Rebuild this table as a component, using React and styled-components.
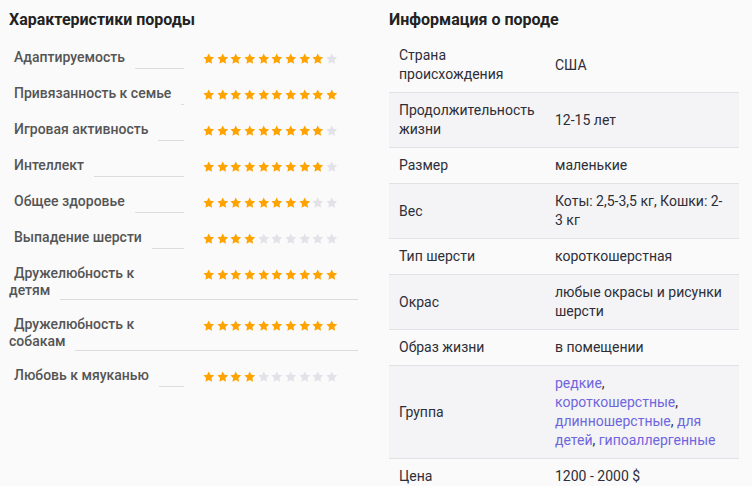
import React from "react"
import styled, { createGlobalStyle } from "styled-components"

const GlobalStyle = createGlobalStyle`
  body {
    margin: 0;
    background: #fafafa;
    font-family: Roboto, "Noto Sans", Arial, sans-serif;
  }
`

const Page = styled.div`
  display: flex;
  align-items: flex-start;
  gap: 31px;
  padding: 9px 0 0 9px;
  width: 752px;
  height: 486px;
  box-sizing: border-box;
  overflow: hidden;
`

const Column = styled.section`
  width: ${p => p.$width}px;
  flex: none;
`

const Title = styled.h2`
  margin: 0 0 ${p => p.$gap}px;
  font-size: 16px;
  line-height: 22px;
  font-weight: 700;
  color: #222;
`

// stars float right over the leader line; the name's background hides the rest
const Trait = styled.div`
  min-height: 19px;
  font-size: 14px;
  line-height: 17px;
  font-weight: 500;
  color: #555;
  margin-bottom: 16px;
  border-bottom: 1px solid #dcdce0;
`

const TraitName = styled.span`
  padding: 0 10px 8px 5px;
  background: #fafafa;
`

const Stars = styled.span`
  float: right;
  width: 155px;
  height: 17px;
  padding: 1px 0 3px 19px;
  display: flex;
  align-items: center;
  background: #fafafa;
`

const Star = styled.svg`
  width: 11.5px;
  height: 11.5px;
  margin-right: 2.17px;
  flex: none;
  fill: ${p => (p.$on ? "#ffa300" : "#e2e2e8")};
`

const Table = styled.table`
  width: 100%;
  border-collapse: collapse;
  font-size: 14px;
  line-height: 19px;
  color: #2e2e38;
`

const Row = styled.tr`
  background: ${p => (p.$shaded ? "#f4f4f6" : "transparent")};
  border-bottom: 1px solid #e1e1e6;
`

const Key = styled.td`
  width: 146px;
  padding: 8px 10px;
  vertical-align: middle;
`

const Value = styled.td`
  padding: 8px 10px 8px 0;
  vertical-align: middle;
`

const Tag = styled.a`
  color: #6f66de;
  text-decoration: none;
`

const traits = [
  ["Адаптируемость", 9],
  ["Привязанность к семье", 10],
  ["Игровая активность", 9],
  ["Интеллект", 9],
  ["Общее здоровье", 8],
  ["Выпадение шерсти", 4],
  ["Дружелюбность к детям", 10],
  ["Дружелюбность к собакам", 10],
  ["Любовь к мяуканью", 4],
]

const groups = ["редкие", "короткошерстные", "длинношерстные", "для детей", "гипоаллергенные"]

const info = [
  ["Страна происхождения", "США"],
  ["Продолжительность жизни", "12-15 лет"],
  ["Размер", "маленькие"],
  ["Вес", "Коты: 2,5-3,5 кг, Кошки: 2-3 кг"],
  ["Тип шерсти", "короткошерстная"],
  ["Окрас", "любые окрасы и рисунки шерсти"],
  ["Образ жизни", "в помещении"],
  [
    "Группа",
    groups.map((g, i) => (
      <React.Fragment key={g}>
        <Tag href="#">{g}</Tag>
        {i < groups.length - 1 ? ", " : ""}
      </React.Fragment>
    )),
  ],
  ["Цена", "1200 - 2000 $"],
]

function Rating({ value }) {
  return (
    <Stars>
      {Array.from({ length: 10 }, (_, i) => (
        <Star key={i} $on={i < value} viewBox="0 0 24 24">
          <path d="M12 .8l3.4 7.1 7.8 1.1-5.7 5.5 1.4 7.8L12 18.6l-6.9 3.7 1.4-7.8L.8 9l7.8-1.1z" />
        </Star>
      ))}
    </Stars>
  )
}

export default function App() {
  return (
    <Page>
      <GlobalStyle />
      <Column $width={349}>
        <Title $gap={18}>Характеристики породы</Title>
        {traits.map(([name, value]) => (
          <Trait key={name}>
            <Rating value={value} />
            <TraitName>{name}</TraitName>
          </Trait>
        ))}
      </Column>
      <Column $width={350}>
        <Title $gap={7}>Информация о породе</Title>
        <Table>
          <tbody>
            {info.map(([key, value], i) => (
              <Row key={key} $shaded={i % 2 === 1}>
                <Key>{key}</Key>
                <Value>{value}</Value>
              </Row>
            ))}
          </tbody>
        </Table>
      </Column>
    </Page>
  )
}
